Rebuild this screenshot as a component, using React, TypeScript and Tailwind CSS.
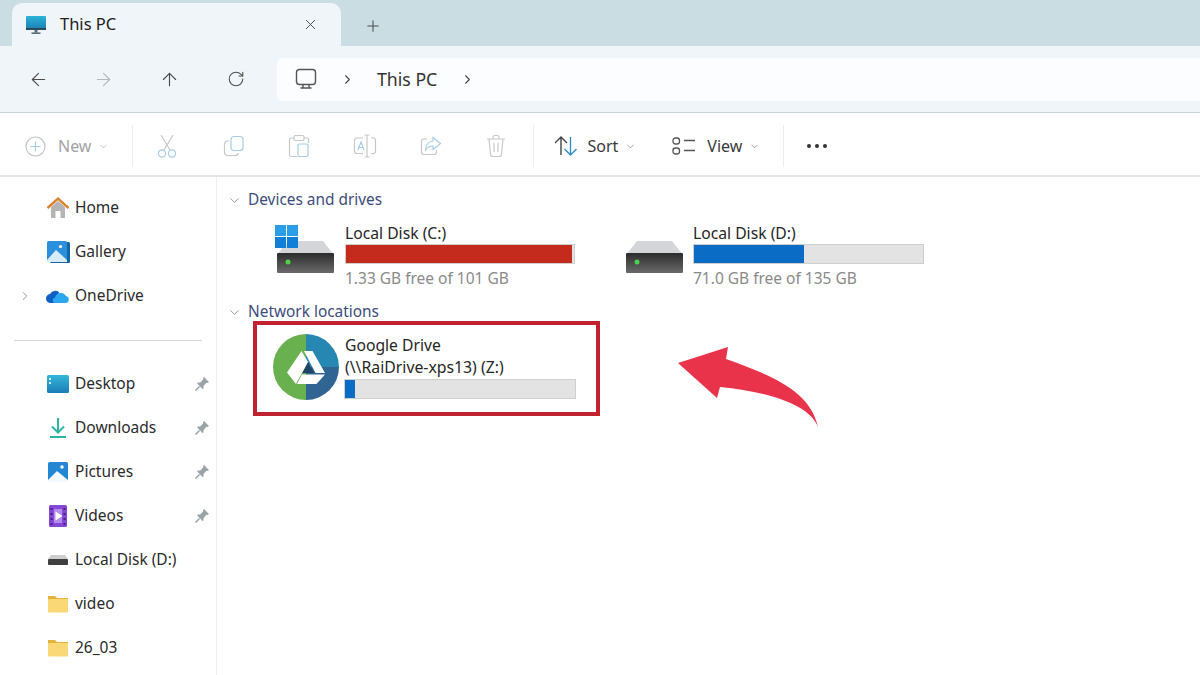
import React from "react";
import { ArrowLeft, ArrowRight, ArrowUp, ChevronDown, ChevronRight, Plus, RotateCw, X } from "lucide-react";

const font = "font-['Noto_Sans','Open_Sans',sans-serif]";

function ThisPcIcon() {
  return (
    <svg width="22" height="20" viewBox="0 0 22 20">
      <defs>
        <linearGradient id="screen" x1="0" y1="0" x2="0" y2="1">
          <stop offset="0" stopColor="#2bb4d6" />
          <stop offset="1" stopColor="#1a7fb8" />
        </linearGradient>
      </defs>
      <rect x="1" y="1" width="20" height="13" rx="1" fill="url(#screen)" />
      <rect x="1" y="13" width="20" height="2" fill="#2f4858" />
      <rect x="9.5" y="15" width="3" height="2.5" fill="#56707e" />
      <rect x="6.5" y="17.5" width="9" height="1.3" fill="#3a4e5a" />
    </svg>
  );
}

function DriveIcon() {
  return (
    <svg width="60" height="34" viewBox="0 0 60 34">
      <defs>
        <linearGradient id="driveBody" x1="0" y1="0" x2="0" y2="1">
          <stop offset="0" stopColor="#2c2c2c" />
          <stop offset="1" stopColor="#6a6a6a" />
        </linearGradient>
      </defs>
      <path d="M12 1 H47 L58 15 H1 Z" fill="#d3d5d8" />
      <rect x="1" y="13" width="57" height="20" rx="1" fill="url(#driveBody)" />
      <circle cx="12" cy="22" r="2.5" fill="#4fd04a" />
    </svg>
  );
}

function WinLogo() {
  return (
    <svg width="23" height="23" viewBox="0 0 23 23">
      <rect x="0" y="0" width="11" height="11" fill="#2a9fe8" />
      <rect x="12" y="0" width="11" height="11" fill="#2a9fe8" />
      <rect x="0" y="12" width="11" height="11" fill="#0f7fd8" />
      <rect x="12" y="12" width="11" height="11" fill="#0f7fd8" />
    </svg>
  );
}

function GoogleDriveBadge() {
  return (
    <svg width="66" height="66" viewBox="0 0 66 66">
      <path d="M33 0 A33 33 0 0 0 33 66 Z" fill="#69b04f" />
      <path d="M33 0 A33 33 0 0 1 66 33 H33 Z" fill="#2688b2" />
      <path d="M33 33 H66 A33 33 0 0 1 33 66 Z" fill="#2f6493" />
      <path d="M35 28 L41 39 H29 Z" fill="#1f4468" />
      <path d="M28.5 17 L14 38.5 L23 50 L35 28 Z" fill="#fff" />
      <path d="M31 17 H39.5 L52 39 H42.5 Z" fill="#fff" />
      <path d="M29 40.5 H52 L43.5 50 H24 Z" fill="#fff" />
    </svg>
  );
}

function Home() {
  return (
    <svg width="24" height="24" viewBox="0 0 24 24">
      <path d="M5 11 L12 5 L19 11 V22 H14.5 V15 H9.5 V22 H5 Z" fill="#b5b5b5" />
      <path d="M1.5 12 L12 2.5 L22.5 12" fill="none" stroke="#d9822f" strokeWidth="2.4" />
    </svg>
  );
}

function Gallery() {
  return (
    <svg width="24" height="24" viewBox="0 0 24 24">
      <rect x="4" y="2" width="20" height="21" rx="1.5" fill="#1464a8" />
      <rect x="1" y="1" width="20" height="21" rx="1.5" fill="#2b90dc" />
      <circle cx="14.5" cy="6.5" r="1.6" fill="#fff" />
      <path d="M1 20 L10 10 L21 20 V22 H1 Z" fill="#d8ecf8" />
    </svg>
  );
}

function Cloud() {
  return (
    <svg width="24" height="16" viewBox="0 0 24 16">
      <path d="M5 15 A4.5 4.5 0 0 1 4 6 A6 6 0 0 1 13 4 L10 15 Z" fill="#0f5fc4" />
      <path d="M9 15 C6 15 6 10 9 9.5 A6 6 0 0 1 20 8 A3.6 3.6 0 0 1 20 15 Z" fill="#2ba7f0" />
    </svg>
  );
}

function Desktop() {
  return (
    <svg width="24" height="20" viewBox="0 0 24 20">
      <defs>
        <linearGradient id="desk" x1="0" y1="0" x2="0" y2="1">
          <stop offset="0" stopColor="#35b6d8" />
          <stop offset="1" stopColor="#1a7db8" />
        </linearGradient>
      </defs>
      <rect x="1" y="1" width="22" height="18" rx="1.5" fill="url(#desk)" />
      <rect x="3" y="4" width="2" height="2" fill="#cdeef8" />
      <rect x="3" y="8" width="2" height="2" fill="#cdeef8" />
    </svg>
  );
}

function Download() {
  return (
    <svg width="24" height="24" viewBox="0 0 24 24">
      <path d="M12 2 V16 M6 10.5 L12 16.5 L18 10.5" fill="none" stroke="#2fb5a5" strokeWidth="2" />
      <rect x="4" y="20" width="16" height="2" fill="#2fb5a5" />
    </svg>
  );
}

function Pictures() {
  return (
    <svg width="22" height="22" viewBox="0 0 22 22">
      <rect x="1" y="1" width="20" height="20" rx="1.5" fill="#2487d4" />
      <circle cx="15" cy="6" r="1.7" fill="#fff" />
      <path d="M1 19 L10 10 L21 19 V21 H1 Z" fill="#f2f8fc" />
    </svg>
  );
}

function Videos() {
  return (
    <svg width="22" height="24" viewBox="0 0 22 24">
      <rect x="2" y="1" width="18" height="22" rx="1.5" fill="#8547d6" />
      <rect x="7" y="5" width="8" height="14" fill="#b48cec" />
      <path d="M8.5 7.5 L15.5 12 L8.5 16.5 Z" fill="#fff" />
      <rect x="3.5" y="4" width="2" height="2" fill="#44207f" />
      <rect x="3.5" y="9" width="2" height="2" fill="#44207f" />
      <rect x="3.5" y="14" width="2" height="2" fill="#44207f" />
      <rect x="3.5" y="19" width="2" height="2" fill="#44207f" />
      <rect x="16.5" y="4" width="2" height="2" fill="#44207f" />
      <rect x="16.5" y="9" width="2" height="2" fill="#44207f" />
      <rect x="16.5" y="14" width="2" height="2" fill="#44207f" />
      <rect x="16.5" y="19" width="2" height="2" fill="#44207f" />
    </svg>
  );
}

function SmallDisk() {
  return (
    <svg width="22" height="12" viewBox="0 0 22 12">
      <path d="M4 1 H18 L21 5 H1 Z" fill="#cfcfcf" />
      <rect x="1" y="5" width="20" height="6" rx="1" fill="#3f3f3f" />
    </svg>
  );
}

function Folder() {
  return (
    <svg width="22" height="18" viewBox="0 0 22 18">
      <path d="M1 1 H8 L10 3 H21 V6 H1 Z" fill="#e5b43c" />
      <rect x="1" y="4" width="20" height="13.5" rx="1" fill="#fbd876" />
    </svg>
  );
}

function Pin() {
  return (
    <svg width="16" height="16" viewBox="0 0 16 16">
      <path d="M10 1 L15 6 L13.5 7 L12.5 6.8 L9.5 10 L9.5 12.5 L8.5 13 L3.2 7.5 L3.8 6.5 L6.2 6.5 L9.2 3.5 L9 2.4 Z" fill="#9aa3a8" />
      <path d="M5.5 10.5 L1.5 14.5" stroke="#9aa3a8" strokeWidth="1.6" />
    </svg>
  );
}

function NavRow({ icon, label, pinned, expandable }: { icon: React.ReactNode; label: string; pinned?: boolean; expandable?: boolean }) {
  return (
    <div className="flex items-center h-[44px] pl-[18px] pr-[6px]">
      <div className="w-[26px]">
        {expandable && <ChevronRight className="text-[#8a8a8a]" size={14} strokeWidth={1.5} />}
      </div>
      <div className="w-[28px] mr-[3px] flex justify-center">{icon}</div>
      <span className="flex-1 text-[15.5px] text-[#2b2b2b] whitespace-nowrap">{label}</span>
      {pinned && <Pin />}
    </div>
  );
}

function ToolIcon({ children, className }: { children: React.ReactNode; className: string }) {
  return <div className={`flex justify-center ${className}`}>{children}</div>;
}

function SectionHeader({ title }: { title: string }) {
  return (
    <div className="flex items-center h-[24px] pl-[10px]">
      <ChevronDown className="text-[#7a7f8a]" size={15} strokeWidth={1.2} />
      <span className="ml-[6px] text-[15.4px] text-[#3d4c7c]">{title}</span>
    </div>
  );
}

function Bar({ width, fill, color }: { width: string; fill: string; color: string }) {
  return (
    <div className={`h-[20px] bg-[#e3e3e3] border border-[#cfcfcf] ${width}`}>
      <div className={`h-full ${fill} ${color}`} />
    </div>
  );
}

export default function App() {
  return (
    <div className={`relative w-[1200px] h-[675px] overflow-hidden flex flex-col bg-white ${font}`}>
      {/* tab strip */}
      <div className="h-[46px] bg-[#c9dde3] flex items-end pl-[12px]">
        <div className="w-[329px] h-[43px] rounded-t-[10px] bg-[#eff5f8] flex items-center pl-[13px]">
          <ThisPcIcon />
          <span className="ml-[13px] text-[16.5px] text-[#222]">This PC</span>
          <X className="ml-[186px] text-[#444]" size={17} strokeWidth={1.3} />
        </div>
        <Plus className="ml-[23px] mb-[11px] text-[#4a4f52]" size={18} strokeWidth={1.4} />
      </div>

      {/* nav bar */}
      <div className="h-[67px] bg-[#eff5f8] border-b border-[#c3d3d6] flex items-center">
        <ToolIcon className="w-[76px]"><ArrowLeft className="text-[#4c4c4c]" size={21} strokeWidth={1.3} /></ToolIcon>
        <ToolIcon className="w-[55px]"><ArrowRight className="text-[#b5b8ba]" size={21} strokeWidth={1.3} /></ToolIcon>
        <ToolIcon className="w-[77px]"><ArrowUp className="text-[#4c4c4c]" size={21} strokeWidth={1.3} /></ToolIcon>
        <ToolIcon className="w-[55px]"><RotateCw className="text-[#4c4c4c]" size={18} strokeWidth={1.4} /></ToolIcon>
        <div className="ml-[14px] flex-1 h-[43px] rounded-l-[6px] bg-[#fbfdfe] flex items-center pl-[18px]">
          <svg width="22" height="22" viewBox="0 0 22 22">
            <rect x="1.5" y="1.5" width="19" height="15" rx="3" fill="none" stroke="#555" strokeWidth="1.4" />
            <path d="M8 17 V19.5 M14 17 V19.5 M5.5 20 H16.5" stroke="#555" strokeWidth="1.4" />
          </svg>
          <ChevronRight className="ml-[23px] text-[#444]" size={15} strokeWidth={1.7} />
          <span className="ml-[22px] text-[17.7px] text-[#333]">This PC</span>
          <ChevronRight className="ml-[23px] text-[#444]" size={15} strokeWidth={1.7} />
        </div>
      </div>

      {/* command bar */}
      <div className="h-[64px] pt-[4px] border-b-2 border-[#e2e5e5] flex items-center text-[16px]">
        <svg className="ml-[25px]" width="21" height="21" viewBox="0 0 21 21">
          <circle cx="10.5" cy="10.5" r="9.5" fill="none" stroke="#c4c7c9" strokeWidth="1.2" />
          <path d="M10.5 5.5 V15.5 M5.5 10.5 H15.5" stroke="#a8cbe6" strokeWidth="1.2" />
        </svg>
        <span className="ml-[12px] text-[#a3a3a3]">New</span>
        <ChevronDown className="ml-[7px] text-[#a8a8a8]" size={11} strokeWidth={1.5} />
        <div className="ml-[23px] w-px h-[42px] bg-[#eeeeee]" />
        <ToolIcon className="w-[68px]">
          <svg width="22" height="24" viewBox="0 0 22 24" fill="none" strokeWidth="1.2">
            <path d="M5 1 L14 16" stroke="#c8c8c8" />
            <path d="M17 1 L8 16" stroke="#c8c8c8" />
            <circle cx="6" cy="19.5" r="3.6" stroke="#a8cbe6" />
            <circle cx="16" cy="19.5" r="3.6" stroke="#a8cbe6" />
          </svg>
        </ToolIcon>
        <ToolIcon className="w-[65px]">
          <svg width="22" height="22" viewBox="0 0 22 22" fill="none" strokeWidth="1.2">
            <rect x="8" y="1.5" width="12" height="14" rx="3" stroke="#a8cbe6" />
            <path d="M6 6 H5 A3.5 3.5 0 0 0 1.5 9.5 V17 A3.5 3.5 0 0 0 5 20.5 H12 A3.5 3.5 0 0 0 15.5 18" stroke="#c8c8c8" />
          </svg>
        </ToolIcon>
        <ToolIcon className="w-[66px]">
          <svg width="22" height="24" viewBox="0 0 22 24" fill="none" strokeWidth="1.2" stroke="#c8c8c8">
            <path d="M6 4 H3 A1.5 1.5 0 0 0 1.5 5.5 V21 A1.5 1.5 0 0 0 3 22.5 H9" />
            <path d="M16 4 H19 A1.5 1.5 0 0 1 20.5 5.5 V9" />
            <rect x="6" y="1.5" width="10" height="5" rx="1.5" />
            <rect x="10" y="10" width="10" height="12.5" rx="1.5" stroke="#a8cbe6" />
          </svg>
        </ToolIcon>
        <ToolIcon className="w-[66px]">
          <svg width="24" height="24" viewBox="0 0 24 24" fill="none" strokeWidth="1.2" stroke="#c8c8c8">
            <path d="M10 4 H4 A2.5 2.5 0 0 0 1.5 6.5 V17 A2.5 2.5 0 0 0 4 19.5 H10" />
            <path d="M18 4 H19 A2.5 2.5 0 0 1 22.5 6.5 V17 A2.5 2.5 0 0 1 19 19.5 H18" />
            <path d="M14 1 V23 M11.5 1 H16.5 M11.5 23 H16.5" />
            <path d="M5 16 L8 8 L11 16 M6 13.5 H10" stroke="#a8cbe6" />
          </svg>
        </ToolIcon>
        <ToolIcon className="w-[66px]">
          <svg width="22" height="20" viewBox="0 0 22 20" fill="none" strokeWidth="1.2">
            <path d="M7 3 H4 A2.5 2.5 0 0 0 1.5 5.5 V16 A2.5 2.5 0 0 0 4 18.5 H14 A2.5 2.5 0 0 0 16.5 16 V14" stroke="#c8c8c8" />
            <path d="M13 1.5 L20.5 7.5 L13 13.5 V10 C9 10 7 11.5 5.5 14 C5.5 9 8.5 5.5 13 5 Z" stroke="#a8cbe6" />
          </svg>
        </ToolIcon>
        <ToolIcon className="w-[64px]">
          <svg width="20" height="24" viewBox="0 0 20 24" fill="none" stroke="#c8c8c8" strokeWidth="1.2">
            <path d="M1 5 H19 M7 5 V3 A1.5 1.5 0 0 1 8.5 1.5 H11.5 A1.5 1.5 0 0 1 13 3 V5" />
            <path d="M3 5 L4.5 20 A2.5 2.5 0 0 0 7 22.5 H13 A2.5 2.5 0 0 0 15.5 20 L17 5" />
            <path d="M8 9 V18 M12 9 V18" />
          </svg>
        </ToolIcon>
        <div className="ml-[5px] w-px h-[42px] bg-[#eeeeee]" />
        <svg className="ml-[20px]" width="24" height="22" viewBox="0 0 24 22" fill="none" strokeWidth="1.4">
          <path d="M7 20 V2 M1 8 L7 2 L13 8" stroke="#444" />
          <path d="M16.5 2 V20 M10.5 14 L16.5 20 L22.5 14" stroke="#2e8ecb" />
        </svg>
        <span className="ml-[9px] text-[#3a3a3a]">Sort</span>
        <ChevronDown className="ml-[7px] text-[#777]" size={11} strokeWidth={1.5} />
        <svg className="ml-[36px]" width="24" height="18" viewBox="0 0 24 18" fill="none" stroke="#555" strokeWidth="1.3">
          <rect x="1" y="1" width="6.5" height="6" rx="2.5" />
          <rect x="1" y="11" width="6.5" height="6" rx="2.5" />
          <path d="M12 3.5 H23 M12 13.5 H23" />
        </svg>
        <span className="ml-[11px] text-[#3a3a3a]">View</span>
        <ChevronDown className="ml-[7px] text-[#777]" size={11} strokeWidth={1.5} />
        <div className="ml-[23px] w-px h-[42px] bg-[#eeeeee]" />
        <div className="ml-[23px] flex gap-[4px]">
          <div className="w-[4px] h-[4px] rounded-full bg-[#333]" />
          <div className="w-[4px] h-[4px] rounded-full bg-[#333]" />
          <div className="w-[4px] h-[4px] rounded-full bg-[#333]" />
        </div>
      </div>

      <div className="flex-1 flex min-h-0">
        {/* sidebar */}
        <div className="w-[217px] shrink-0 border-r border-[#eef0f0] pt-[9px]">
          <NavRow icon={<Home />} label="Home" />
          <NavRow icon={<Gallery />} label="Gallery" />
          <NavRow icon={<Cloud />} label="OneDrive" expandable />
          <div className="mx-[14px] h-[44px] flex items-center">
            <div className="w-full h-px bg-[#d6d6d6]" />
          </div>
          <NavRow icon={<Desktop />} label="Desktop" pinned />
          <NavRow icon={<Download />} label="Downloads" pinned />
          <NavRow icon={<Pictures />} label="Pictures" pinned />
          <NavRow icon={<Videos />} label="Videos" pinned />
          <NavRow icon={<SmallDisk />} label="Local Disk (D:)" />
          <NavRow icon={<Folder />} label="video" />
          <NavRow icon={<Folder />} label="26_03" />
        </div>

        {/* drives */}
        <div className="flex-1 pt-[11px]">
          <SectionHeader title="Devices and drives" />
          <div className="flex mt-[8px] h-[70px]">
            <div className="relative w-[408px] flex pl-[59px] pt-[10px]">
              <div className="absolute left-[58px] top-[5px] z-10"><WinLogo /></div>
              <div className="mt-[10px] w-[69px] shrink-0"><DriveIcon /></div>
              <div className="-mt-[10px]">
                <div className="text-[15.7px] leading-[24px] pt-[1px] -mb-[1px] text-[#262626]">Local Disk (C:)</div>
                <Bar width="w-[230px]" fill="w-[226px]" color="bg-[#c42b1c]" />
                <div className="text-[15.5px] leading-[24px] mt-[2px] text-[#8a8a8a]">1.33 GB free of 101 GB</div>
              </div>
            </div>
            <div className="flex">
              <div className="mt-[20px] w-[68px] shrink-0"><DriveIcon /></div>
              <div>
                <div className="text-[15.7px] leading-[24px] pt-[1px] -mb-[1px] text-[#262626]">Local Disk (D:)</div>
                <Bar width="w-[231px]" fill="w-[110px]" color="bg-[#0a6cc4]" />
                <div className="text-[15.5px] leading-[24px] mt-[2px] text-[#8a8a8a]">71.0 GB free of 135 GB</div>
              </div>
            </div>
          </div>
          <div className="mt-[10px]">
            <SectionHeader title="Network locations" />
          </div>
          <div className="ml-[36px] -mt-[3px] w-[347px] h-[95px] border-[4px] border-[#c0222f] flex pl-[16px] pt-[9px]">
            <GoogleDriveBadge />
            <div className="ml-[6px]">
              <div className="text-[15.7px] leading-[22px] text-[#262626]">Google Drive</div>
              <div className="text-[15.8px] leading-[22px] text-[#262626] whitespace-nowrap">(\\RaiDrive-xps13) (Z:)</div>
              <div className="mt-[1px] -ml-[1px]">
                <Bar width="w-[232px]" fill="w-[10px]" color="bg-[#0a6cc4]" />
              </div>
            </div>
          </div>
        </div>
      </div>

      {/* annotation arrow */}
      <svg className="absolute left-[660px] top-[330px]" width="180" height="110" viewBox="0 0 180 110">
        <path d="M18 33 L68 17 L66 29 C110 45 150 60 158 97 C150 75 110 62 60 57 L57 68 Z" fill="#e8334a" />
      </svg>
    </div>
  );
}
